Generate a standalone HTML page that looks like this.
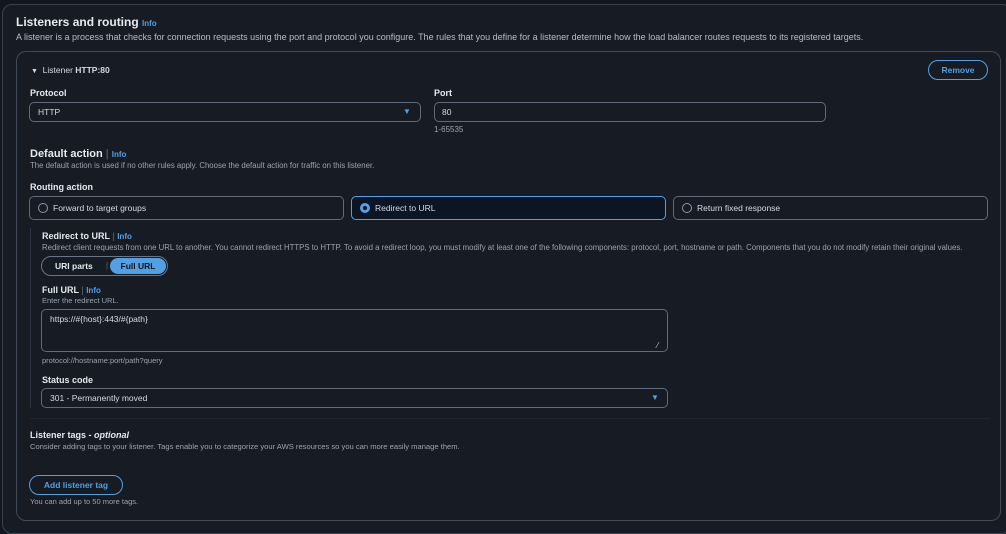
<!DOCTYPE html><html><head><style>
*{margin:0;padding:0;box-sizing:border-box}
body{width:1006px;height:527px;background:#12161e;font-family:"Liberation Sans",sans-serif;color:#d5dbe3;position:relative;overflow:hidden}
.a{position:absolute;white-space:nowrap}
.box{position:absolute;border:1px solid #5f6b7a;border-radius:6px}
.b{font-weight:bold}
.s{font-size:8px;color:#9aa4b1}
.l{font-size:9px;font-weight:bold;color:#e6eaef}
.info{color:#539fe5;font-size:8px;font-weight:bold}
.sep{color:#5f6b7a;font-weight:normal}
.radio{position:absolute;width:10px;height:10px;border:1px solid #8d99a8;border-radius:50%}
.btn{display:flex;align-items:center;justify-content:center}
</style></head><body>
<div class="box" style="left:2px;top:4px;width:1010px;height:530px;background:#171b24;border-color:#3a4250;border-radius:10px"></div>
<div class="a b" style="left:16px;top:15px;font-size:12px;color:#e6eaef">Listeners and routing <span class="info" style="font-size:8px">Info</span></div>
<div class="a" style="left:16px;top:32px;font-size:9px;color:#b6bec9">A listener is a process that checks for connection requests using the port and protocol you configure. The rules that you define for a listener determine how the load balancer routes requests to its registered targets.</div>
<div class="box" style="left:16px;top:51px;width:985px;height:470px;border-color:#414a58;border-radius:10px;background:#171b24"></div>
<div class="a" style="left:31px;top:65px;font-size:8.5px;color:#d5dbe3"><span style="font-size:7px">▼</span>&nbsp; Listener <b>HTTP:80</b></div>
<div class="box btn" style="left:928px;top:60px;width:60px;height:20px;border:1.5px solid #539fe5;border-radius:10px;color:#539fe5;font-size:8.5px;font-weight:bold">Remove</div>
<div class="a l" style="left:30px;top:88px">Protocol</div>
<div class="box" style="left:29px;top:102px;width:392px;height:20px;border-radius:5px"></div>
<div class="a" style="left:38px;top:107px;font-size:8.5px">HTTP</div>
<div class="a" style="left:403px;top:107px;font-size:8px;color:#539fe5">▼</div>
<div class="a l" style="left:434px;top:88px">Port</div>
<div class="box" style="left:434px;top:102px;width:392px;height:20px;border-radius:5px"></div>
<div class="a" style="left:442px;top:107px;font-size:8.5px">80</div>
<div class="a s" style="left:434px;top:125px">1-65535</div>
<div class="a b" style="left:30px;top:148px;font-size:11px;color:#e6eaef">Default action <span class="sep">|</span> <span class="info">Info</span></div>
<div class="a s" style="left:30px;top:161px;font-size:7.8px">The default action is used if no other rules apply. Choose the default action for traffic on this listener.</div>
<div class="a l" style="left:30px;top:182px">Routing action</div>
<div class="box" style="left:29px;top:196px;width:315px;height:24px;border-radius:5px"></div>
<div class="radio" style="left:38px;top:203px"></div>
<div class="a" style="left:53px;top:203px;font-size:8.5px">Forward to target groups</div>
<div class="box" style="left:351px;top:196px;width:315px;height:24px;border:1.5px solid #539fe5;border-radius:5px;background:#0b1523"></div>
<div class="radio" style="left:360px;top:203px;border:3px solid #539fe5;background:#0b1523"></div>
<div class="a" style="left:375px;top:203px;font-size:8.5px">Redirect to URL</div>
<div class="box" style="left:673px;top:196px;width:315px;height:24px;border-radius:5px"></div>
<div class="radio" style="left:682px;top:203px"></div>
<div class="a" style="left:697px;top:203px;font-size:8.5px">Return fixed response</div>
<div class="a" style="left:30px;top:228px;width:1px;height:180px;background:#2e3540"></div>
<div class="a l" style="left:42px;top:231px">Redirect to URL <span class="sep">|</span> <span class="info">Info</span></div>
<div class="a s" style="left:42px;top:243px;font-size:7.8px">Redirect client requests from one URL to another. You cannot redirect HTTPS to HTTP. To avoid a redirect loop, you must modify at least one of the following components: protocol, port, hostname or path. Components that you do not modify retain their original values.</div>
<div class="box" style="left:41px;top:256px;width:127px;height:20px;border-color:#6b7584;border-radius:10px"></div>
<div class="a b" style="left:55px;top:261px;font-size:8.5px;color:#e6eaef">URI parts</div>
<div class="a" style="left:106px;top:261px;font-size:8px;color:#5f6b7a">|</div>
<div class="a btn" style="left:110px;top:258px;width:56px;height:16px;border-radius:8px;background:#539fe5;color:#0f141a;font-size:8.5px;font-weight:bold">Full URL</div>
<div class="a l" style="left:42px;top:285px">Full URL <span class="sep">|</span> <span class="info">Info</span></div>
<div class="a s" style="left:42px;top:296px;font-size:7.5px">Enter the redirect URL.</div>
<div class="box" style="left:41px;top:309px;width:627px;height:43px;border-radius:5px"></div>
<div class="a" style="left:50px;top:314px;font-size:8.5px">https://#{host}:443/#{path}</div>
<div class="a" style="left:657px;top:341px;font-size:8px;color:#ccc">⁄</div>
<div class="a s" style="left:42px;top:356px;font-size:7.5px">protocol://hostname:port/path?query</div>
<div class="a l" style="left:42px;top:375px">Status code</div>
<div class="box" style="left:41px;top:388px;width:627px;height:20px;border-radius:5px"></div>
<div class="a" style="left:50px;top:393px;font-size:8.5px">301 - Permanently moved</div>
<div class="a" style="left:651px;top:393px;font-size:8px;color:#539fe5">▼</div>
<div class="a" style="left:30px;top:418px;width:960px;height:1px;background:#1f252f"></div>
<div class="a l" style="left:30px;top:430px">Listener tags - <i>optional</i></div>
<div class="a s" style="left:30px;top:442px;font-size:7.6px">Consider adding tags to your listener. Tags enable you to categorize your AWS resources so you can more easily manage them.</div>
<div class="box btn" style="left:29px;top:475px;width:94px;height:20px;border:1.5px solid #539fe5;border-radius:10px;color:#539fe5;font-size:8.5px;font-weight:bold">Add listener tag</div>
<div class="a s" style="left:30px;top:497px;font-size:7.5px">You can add up to 50 more tags.</div>
</body></html>
